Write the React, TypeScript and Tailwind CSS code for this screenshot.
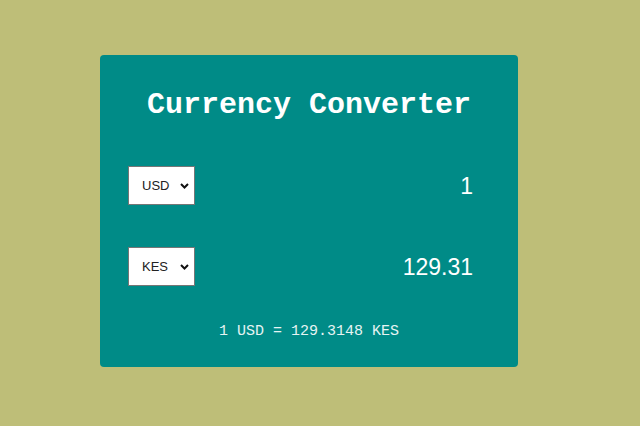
import React from "react";

function FakeSelect({ label }: { label: string }) {
  return (
    <div className="flex h-[39px] w-[67px] items-center justify-between border border-[#767676] bg-white pl-[13px] pr-[5px] text-[13px] text-[#222] [font-family:'Liberation_Sans',Arial,sans-serif]">
      <span>{label}</span>
      <svg width="9" height="6" viewBox="0 0 9 6" className="mt-[1px]">
        <path d="M1 1 L4.5 4.5 L8 1" fill="none" stroke="#111" strokeWidth="2" />
      </svg>
    </div>
  );
}

export default function App() {
  return (
    <div className="h-[426px] w-[640px] bg-[#bebe78] pl-[100px] pt-[55px]">
      <div className="flex h-[312px] w-[418px] flex-col rounded-[4px] bg-[#008b87] pt-[32px]">
        <h1 className="text-center text-[30px] font-bold leading-[36px] text-white [font-family:'Liberation_Mono','Courier_New',monospace]">
          Currency Converter
        </h1>
        <div className="mt-[43px] flex h-[39px] items-center justify-between pl-[28px] pr-[45px]">
          <FakeSelect label="USD" />
          <span className="text-[23px] leading-[24px] text-white [font-family:'Liberation_Sans',Arial,sans-serif]">1</span>
        </div>
        <div className="mt-[42px] flex h-[39px] items-center justify-between pl-[28px] pr-[45px]">
          <FakeSelect label="KES" />
          <span className="text-[23px] leading-[24px] text-white [font-family:'Liberation_Sans',Arial,sans-serif]">129.31</span>
        </div>
        <p className="mt-[36px] text-center text-[15px] leading-[20px] text-[#e6f4f3] [font-family:'Liberation_Mono','Courier_New',monospace]">
          1 USD = 129.3148 KES
        </p>
      </div>
    </div>
  );
}
